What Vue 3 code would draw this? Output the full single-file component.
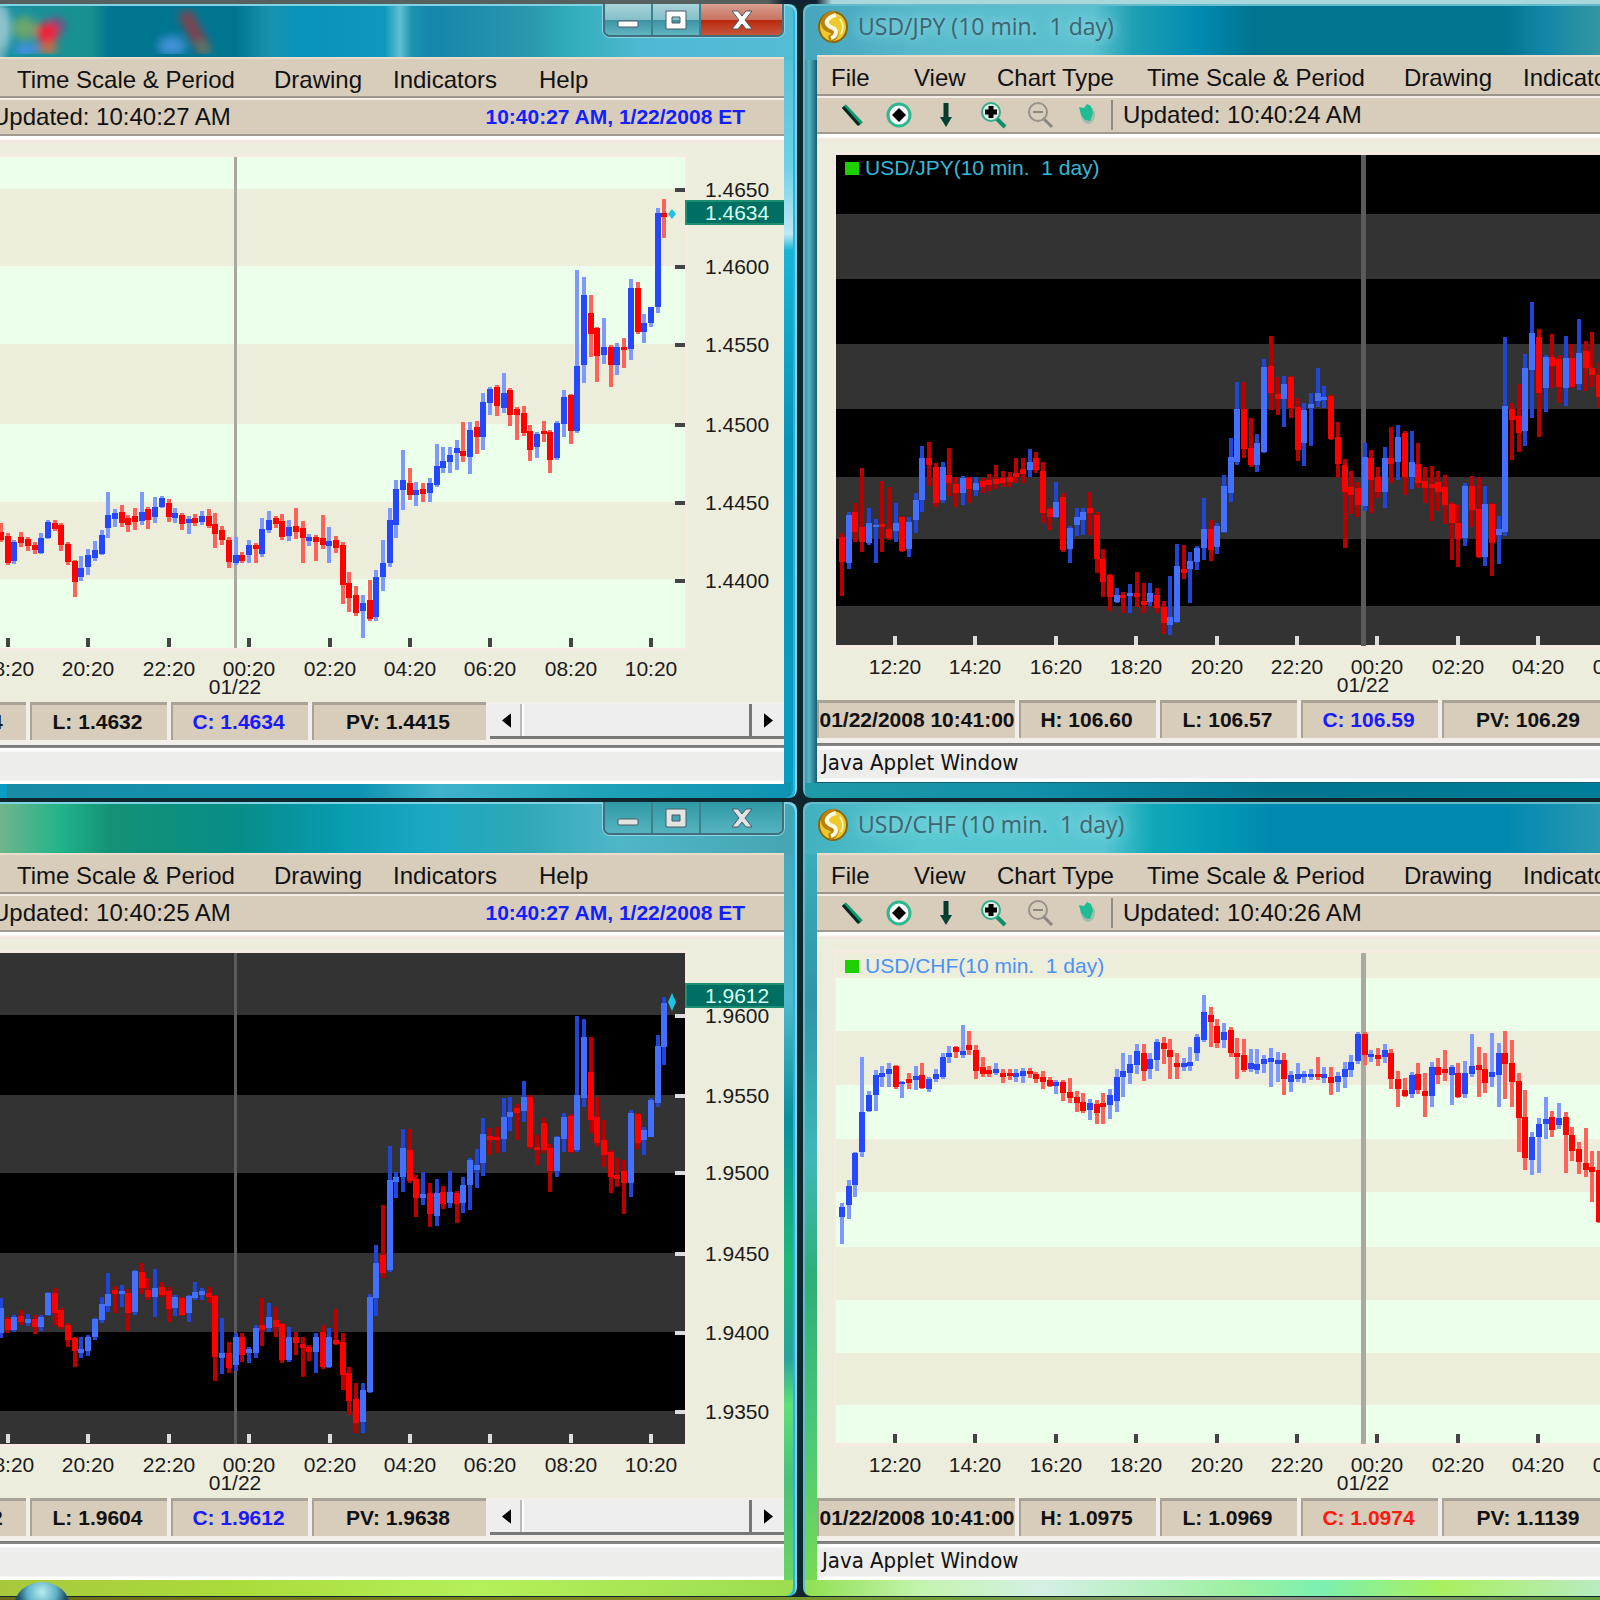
<script setup>
const parse = (text) =>
  text.trim().split(/\s+/).map((item) => {
    const [high, low, top, bottom] = item.slice(1).split(',').map(Number)
    return { up: item[0] === 'B', high, low, top, bottom }
  })

const eur = parse(`
R373,392,382,390 R383,415,386,413 B390,414,392,411 R382,397,387,393 R387,401,389,396 R392,404,395,400
B383,404,388,403 B370,389,372,388 R370,381,373,379 R373,401,375,395 R392,415,394,412 R410,447,411,432
B406,431,418,427 B399,425,405,417 B391,411,400,408 B380,405,385,404 B342,388,365,378 B359,377,363,369
R355,377,362,373 R365,382,368,375 R358,380,366,372 B342,375,362,371 R357,379,359,370 B347,373,357,367
B346,358,348,357 R349,372,353,367 B358,373,363,368 R363,380,365,374 B366,384,369,373 R364,376,368,373
B361,375,366,372 R359,378,366,376 R363,398,374,384 R376,395,380,390 R387,418,390,412 B387,415,405,413
R402,413,405,411 B390,413,395,405 R393,413,395,399 B368,407,379,404 B361,383,370,380 R366,378,368,374
R364,390,371,387 B370,391,377,386 R358,389,376,382 R371,413,378,388 B384,396,387,391 R385,411,387,392
R365,399,388,395 B377,413,391,396 R386,403,390,398 R392,454,395,435 R422,462,433,448 R436,466,445,463
B445,488,453,461 R430,471,450,469 B420,471,427,467 B390,441,413,427 B358,417,370,413 B330,388,339,375
B300,360,330,340 R318,350,333,345 B332,356,340,345 R333,352,339,344 B328,352,333,343 B294,337,316,335
B297,323,311,318 B297,323,305,312 B290,320,298,303 R272,312,301,306 B272,324,280,307 R271,304,277,287
B243,300,252,287 B237,265,239,253 R235,266,237,256 B223,263,243,258 R238,276,240,265 R257,290,259,265
R256,286,263,283 R275,311,281,300 B282,308,284,297 R271,292,281,284 R280,323,282,310 B271,310,273,308
B240,287,247,274 R244,294,245,281 B120,283,216,281 B127,233,145,215 R145,207,163,184 R177,232,178,206
B168,214,197,205 R195,237,197,215 B193,225,197,215 R188,218,197,200 B129,210,138,199 R132,184,138,182
B164,193,173,182 B157,177,157,173 B58,163,63,157 R49,88,63,67`)

const gbp = parse(`
B358,398,368,393 R377,393,379,390 B375,392,377,390 R370,385,376,382 B374,386,379,383 R375,394,379,387
B375,391,377,387 B352,376,353,375 R348,385,353,373 R368,389,370,387 R383,407,385,400 R397,427,398,411
B397,418,409,413 B395,416,397,411 B378,400,379,397 B357,383,364,380 B333,372,354,366 R346,373,350,354
B345,367,351,354 R349,391,353,373 B330,375,331,372 R323,354,332,348 R338,360,350,357 B329,377,348,357
R342,357,347,355 R347,382,351,369 B355,376,357,368 R357,376,358,375 B355,382,356,373 B342,360,352,358
B348,360,351,355 R347,363,353,357 R355,441,356,417 B378,434,413,418 R402,433,413,428 B393,431,397,425
R393,422,397,415 B407,423,409,413 B385,418,388,413 R358,406,385,390 B363,392,377,388 R367,397,380,387
R383,423,384,420 B387,422,397,420 R392,415,397,403 R397,437,404,408 R405,421,407,412 B393,433,397,412
R385,429,392,427 B388,428,397,427 R369,405,400,404 R393,450,402,435 R427,475,433,461 R443,493,459,483
B443,493,450,482 B354,453,357,452 B305,376,323,358 R265,338,315,333 B206,332,240,330 B232,258,237,242
B189,252,208,237 R189,243,210,241 R235,277,239,258 B232,265,254,258 R243,287,253,274 B239,286,253,276
R246,269,252,264 B231,268,252,263 R251,283,253,264 B237,273,245,263 B218,270,220,245 B209,248,225,230
B178,236,194,223 R188,215,196,200 R187,213,197,200 B158,212,177,199 B157,191,172,177 R164,200,168,173
B141,182,157,171 R155,209,157,207 R195,225,207,210 R178,213,183,210 R204,252,208,231 B196,237,197,231
B173,212,177,199 R174,213,176,212 B76,212,155,210 B79,167,97,158 R97,193,132,180 R157,207,177,203
R180,227,200,215 R210,253,212,237 R218,247,235,239 R220,274,231,243 B170,257,173,243 R173,209,174,203
B187,215,190,200 B158,197,160,197 B95,167,106,163 B57,125,63,107`)

const jpy = parse(`
R253,316,257,282 B232,289,235,283 R223,262,232,252 R188,272,247,262 B228,265,243,263 B239,283,245,247
R201,272,244,247 R207,260,249,258 B223,262,243,251 R236,272,237,271 B237,277,242,269 B213,253,220,240
B166,232,178,220 R162,206,178,185 R183,227,187,223 B182,223,187,220 R168,216,195,203 R197,227,204,213
B196,225,198,213 R197,223,198,209 B197,216,203,210 R198,213,201,207 R194,211,200,205 R185,209,199,204
R191,207,198,203 R192,207,197,202 R178,203,193,197 R178,203,189,194 B169,197,182,190 R172,193,178,190
R182,243,191,233 R227,250,229,237 B202,238,222,237 R213,272,217,270 B246,283,248,269 B228,256,237,245
B228,255,232,240 R212,255,228,233 R232,293,235,279 R269,317,279,302 R294,331,295,317 B308,323,315,322
R312,333,315,318 B304,333,313,316 R292,327,313,317 R303,333,321,325 B303,326,313,322 R308,333,315,328
R321,354,327,343 B296,355,337,345 B264,343,286,342 R265,299,289,293 B272,323,281,289 B266,290,268,282
B218,280,249,268 R240,281,249,270 B243,274,246,267 B195,253,206,252 B158,222,177,213 B102,185,129,182
R102,178,129,169 R138,187,168,185 B154,192,163,185 B79,173,87,172 R56,130,86,113 R97,135,114,119
B96,147,104,119 R96,138,97,128 R118,181,127,170 B123,186,130,163 B113,166,124,128 B88,127,113,121
B106,128,117,120 R115,160,116,159 R142,198,157,184 R179,268,185,212 R191,234,207,215 R202,237,208,225
B163,231,177,226 R170,233,178,200 R187,218,197,212 B167,228,178,212 R147,203,178,184 B145,200,157,182
R151,215,153,197 B151,209,182,197 R163,208,184,203 R187,223,201,208 R186,241,204,208 R191,231,202,212
R195,244,207,225 R222,280,224,243 R225,287,243,259 B203,266,206,258 R196,247,206,230 R197,278,229,277
B206,286,224,277 R223,296,224,263 B236,284,249,255 B57,256,126,252 R123,180,129,140 R104,172,136,153
B74,166,88,151 B22,138,53,90 R49,157,57,113 B75,132,77,108 R54,108,77,86 R75,123,79,107
B56,126,78,108 R64,108,78,107 B39,110,73,104 R61,111,71,88 R52,107,88,95 R82,128,95,117`)

const chf = parse(`
B263,304,267,277 B240,279,246,265 B212,257,213,245 B117,217,172,212 B151,172,155,171 B130,171,135,155
B126,147,133,137 B123,147,129,134 R125,149,126,147 B141,158,142,144 R133,149,139,143 B126,150,136,140
R123,149,135,148 B137,152,139,149 B129,142,134,139 B113,139,117,137 B106,123,113,117 R106,118,107,112
B85,118,111,115 R91,115,105,110 R105,139,110,131 R117,137,127,134 R126,137,130,134 B123,135,129,133
R129,143,133,137 R129,140,133,136 B129,142,133,137 B128,143,131,136 R128,138,131,134 R132,143,134,139
R131,149,137,142 R137,147,140,146 B140,154,142,146 R140,161,142,153 R138,163,152,158 R151,172,157,163
R153,173,162,171 B159,180,163,170 R160,184,164,173 R153,184,163,167 B149,179,155,165 B129,172,137,161
B113,157,131,137 B115,144,124,133 B104,134,111,125 R104,141,113,131 B113,139,119,129 B99,131,102,120
R97,124,103,109 R99,139,110,117 R113,139,123,127 B118,131,123,127 B107,131,122,126 B94,121,97,113
B55,102,72,100 R67,107,75,82 R79,108,86,103 B83,108,92,100 R87,117,90,113 R98,139,113,117
R99,132,115,130 B109,132,123,129 B109,134,124,130 B115,133,119,124 B108,147,118,122 B112,142,120,124
R113,155,120,139 B131,152,135,142 B123,142,134,139 B131,143,134,137 B129,140,134,137 R117,140,134,137
B127,143,134,138 R127,155,137,143 B132,152,136,142 B122,148,129,137 B115,137,122,130 B92,124,94,121
R92,125,94,115 B110,122,114,117 R108,126,115,119 B104,123,110,117 R109,149,113,139 R131,167,139,149
R138,157,150,156 B132,158,135,154 R123,154,134,150 R133,177,151,156 B122,167,127,156 R118,144,127,135
R110,141,129,133 B125,165,127,135 R123,158,133,157 B121,158,133,154 B94,137,126,134 R107,157,125,130
R113,153,129,143 B93,147,132,137 B103,167,113,135 R91,159,113,124 R100,167,123,142 R133,212,141,178
R150,230,177,218 B192,235,197,220 B178,233,184,197 B157,199,179,184 R171,197,177,190 B163,189,178,185
R172,233,177,195 R187,221,195,211 R202,234,209,222 R188,237,223,230 R211,262,227,232 R211,283,230,282`)

const hours = (list, from) => list.map((label, i) => ({ label, x: from + Math.round(i * 80.4) }))
const leftHours = hours(['18:20', '20:20', '22:20', '00:20', '02:20', '04:20', '06:20', '08:20', '10:20'], 8)
const rightHours = hours(['12:20', '14:20', '16:20', '18:20', '20:20', '22:20', '00:20', '02:20', '04:20', '06:20'], 78)

const menu = [
  { label: 'File', slot: 83 },
  { label: 'View', slot: 83 },
  { label: 'Chart Type', slot: 150 },
  { label: 'Time Scale & Period', slot: 257 },
  { label: 'Drawing', slot: 119 },
  { label: 'Indicators', slot: 146 },
  { label: 'Help', slot: 83 },
]

// bands: lower edge of each stripe, measured from the top of the chart panel
const windows = [
  {
    id: 'eur', side: 'left', skin: 'active', theme: 'light', title: '', menu: menu.slice(3),
    updated: '10:40:27 AM', clock: '10:40:27 AM, 1/22/2008 ET',
    candles: eur, first: 1, shift: 14, hours: leftHours, midnight: 235, line: 3,
    firstBand: 'a', bands: [53, 130, 208, 288, 366, 443, 512],
    prices: [['1.4650', 54], ['1.4600', 131], ['1.4550', 209], ['1.4500', 289], ['1.4450', 367], ['1.4400', 445]],
    tag: { label: '1.4634', y: 64, mark: 78, half: 5 },
    cells: [['H: 1.4634', ''], ['L: 1.4632', ''], ['C: 1.4634', 'up'], ['PV: 1.4415', 'wide']],
  },
  {
    id: 'jpy', side: 'right', skin: 'jpy-frame', theme: 'dark', title: 'USD/JPY (10 min.  1 day)', menu: menu.slice(0, 6),
    updated: '10:40:24 AM', clock: '',
    candles: jpy, first: 25, shift: 146, hours: rightHours, midnight: 546, line: 5,
    firstBand: 'a', bands: [80, 145, 210, 275, 343, 405, 472, 511], legend: 'USD/JPY(10 min.  1 day)', prices: [],
    cells: [['01/22/2008 10:41:00', 'date'], ['H: 106.60', ''], ['L: 106.57', ''], ['C: 106.59', 'up'], ['PV: 106.29', 'wide']],
  },
  {
    id: 'gbp', side: 'left', skin: 'gbp-frame', theme: 'dark', title: '', menu: menu.slice(3),
    updated: '10:40:25 AM', clock: '10:40:27 AM, 1/22/2008 ET',
    candles: gbp, first: 1, shift: 8, hours: leftHours, midnight: 235, line: 3,
    firstBand: 'b', bands: [83, 163, 241, 321, 400, 479, 512],
    prices: [['1.9600', 84], ['1.9550', 164], ['1.9500', 241], ['1.9450', 322], ['1.9400', 401], ['1.9350', 480]],
    tag: { label: '1.9612', y: 51, mark: 70, half: 9 },
    cells: [['H: 1.9612', ''], ['L: 1.9604', ''], ['C: 1.9612', 'up'], ['PV: 1.9638', 'wide']],
  },
  {
    id: 'chf', side: 'right', skin: 'chf-frame', theme: 'light', title: 'USD/CHF (10 min.  1 day)', menu: menu.slice(0, 6),
    updated: '10:40:26 AM', clock: '',
    candles: chf, first: 25, shift: 8, hours: rightHours, midnight: 546, line: 5,
    firstBand: 'b', bands: [46, 99, 153, 207, 260, 315, 368, 421, 473, 511], legend: 'USD/CHF(10 min.  1 day)', prices: [],
    cells: [['01/22/2008 10:41:00', 'date'], ['H: 1.0975', ''], ['L: 1.0969', ''], ['C: 1.0974', 'down'], ['PV: 1.1139', 'wide']],
  },
]

const PLOT_TOP = 21
const stripes = (w) =>
  w.bands.map((end, i) => {
    const start = i ? w.bands[i - 1] : PLOT_TOP
    const odd = i % 2 === 1
    const kind = (w.firstBand === 'a') === odd ? 'b' : 'a'
    return { y: start, height: end - start, kind }
  })
const candleX = (w, i) => w.first + Math.round(i * 6.7)
</script>

<template>
  <main class="desktop">
    <section v-for="w in windows" :key="w.id" class="window" :class="[w.side, w.skin]">
      <header class="titlebar">
        <template v-if="w.title">
          <svg class="coin" viewBox="0 0 32 34" aria-hidden="true">
            <ellipse cx="16" cy="17" rx="15" ry="16" fill="#8a6410" />
            <ellipse cx="16" cy="17" rx="13" ry="14" fill="#ecc92c" />
            <path d="M18 4C9 5 5 12 9 17c3 4 9 2 9 6 0 3-3 5-6 6" fill="none" stroke="#b9820e" stroke-width="7" />
            <path d="M19 5C11 7 8 12 11 15c3 4 8 2 8 7 0 3-2 5-5 6" fill="none" stroke="#fffbe0" stroke-width="4" />
            <path d="M23 9c3 4 4 10 1 15" fill="none" stroke="#fff3a8" stroke-width="2" />
          </svg>
          <h2 class="caption">{{ w.title }}</h2>
        </template>
        <template v-else>
          <svg v-if="w.id === 'eur'" class="reflection" viewBox="0 0 220 46" aria-hidden="true">
            <defs>
              <filter id="soft" x="-50%" y="-50%" width="200%" height="200%"><feGaussianBlur stdDeviation="4" /></filter>
            </defs>
            <g filter="url(#soft)">
              <ellipse cx="2" cy="20" rx="8" ry="22" fill="#8fc3cc" />
              <ellipse cx="24" cy="20" rx="12" ry="12" fill="#6aa66a" />
              <ellipse cx="56" cy="18" rx="9" ry="9" fill="#7a4a80" />
              <ellipse cx="48" cy="40" rx="9" ry="8" fill="#b5744a" />
              <ellipse cx="47" cy="25" rx="11" ry="11" fill="#f0243c" />
              <ellipse cx="26" cy="42" rx="12" ry="6" fill="#4a8fe8" />
              <ellipse cx="172" cy="38" rx="14" ry="10" fill="#3f90d6" />
              <path d="M184 4l22 42" stroke="#81404c" stroke-width="14" />
              <path d="M198 34l10 12" stroke="#4d8a6e" stroke-width="6" />
            </g>
          </svg>
          <div class="controls">
            <button type="button" aria-label="Minimize">
              <svg viewBox="0 0 24 24"><rect x="2" y="13" width="20" height="6" rx="1" /></svg>
            </button>
            <button type="button" aria-label="Maximize">
              <svg viewBox="0 0 24 24"><path fill-rule="evenodd" d="M2 3h20v18H2zM8 9v6h8V9z" /></svg>
            </button>
            <button type="button" class="close" aria-label="Close">
              <svg viewBox="0 0 24 24"><path d="M2 3h6l4 5 4-5h6l-7 9 7 9h-6l-4-5-4 5H2l7-9z" /></svg>
            </button>
          </div>
        </template>
      </header>

      <div class="content">
        <nav class="menubar">
          <button v-for="m in w.menu" :key="m.label" type="button" :style="{ width: m.slot + 'px' }">{{ m.label }}</button>
        </nav>

        <div class="toolbar">
          <div v-if="w.side === 'right'" class="tools">
            <button type="button" aria-label="Trend line">
              <svg viewBox="0 0 30 30"><path d="M7 6l17 18" stroke="#119a72" stroke-width="5" /><path d="M6 7l16 18" stroke="#06251e" stroke-width="3" /></svg>
            </button>
            <button type="button" aria-label="Crosshair">
              <svg viewBox="0 0 30 30"><circle cx="15" cy="15" r="11" fill="#fff" stroke="#2fb890" stroke-width="3" /><path d="M15 8l7 7-7 7-7-7z" /></svg>
            </button>
            <button type="button" aria-label="Arrow">
              <svg viewBox="0 0 30 30"><path d="M15 3v17" stroke="#053b2d" stroke-width="5" /><path d="M9 17h12l-6 10z" fill="#064233" /></svg>
            </button>
            <button type="button" aria-label="Zoom in">
              <svg viewBox="0 0 30 30"><path d="M18 18l9 9" stroke="#0c8f6a" stroke-width="4" /><circle cx="13" cy="12" r="9" fill="#d9efe4" stroke="#35ad8c" stroke-width="2" /><path d="M13 6v12M7 12h12" stroke="#000" stroke-width="5" /></svg>
            </button>
            <button type="button" aria-label="Zoom out">
              <svg viewBox="0 0 30 30"><path d="M18 18l9 9" stroke="#8a8780" stroke-width="3" /><circle cx="13" cy="12" r="9" fill="none" stroke="#97938b" stroke-width="2" /><path d="M8 12h10" stroke="#8a8780" stroke-width="2" /></svg>
            </button>
            <button type="button" aria-label="Pointer">
              <svg viewBox="0 0 30 30"><ellipse cx="16" cy="15" rx="7" ry="9" fill="#a4bcae" /><path d="M7 7l5 1 3-4 4 2 2 7-3 8-5-1-4-5z" fill="#1fbd95" /></svg>
            </button>
          </div>
          <p class="updated">Updated: {{ w.updated }}</p>
          <time v-if="w.clock" class="clock">{{ w.clock }}</time>
        </div>

        <svg class="chart" :class="w.theme" role="img" :aria-label="w.legend || 'Price chart'">
          <svg :x="w.side === 'left' ? '100%' : 0" overflow="visible">
            <g :transform="w.side === 'left' ? 'translate(-784 0)' : null">
              <rect :x="w.side === 'left' ? -2000 : 17" :y="PLOT_TOP - 3" :width="w.side === 'left' ? 2688 : 3000" height="497" class="halo" />
              <rect v-for="s in stripes(w)" :key="s.y" :x="w.side === 'left' ? -2000 : 19" :y="s.y"
                :width="w.side === 'left' ? 2685 : 3000" :height="s.height" :class="'band-' + s.kind" />
              <rect :x="w.midnight - Math.floor(w.line / 2)" :y="PLOT_TOP" :width="w.line" height="491" class="midnight" />
              <g v-for="(c, i) in w.candles" :key="i" :class="c.up ? 'rise' : 'fall'">
                <rect class="wick" :x="candleX(w, i) - 2" :y="c.high + w.shift" width="4" :height="c.low - c.high" />
                <rect class="body" :x="candleX(w, i) - 3" :y="c.top + w.shift" width="6" :height="c.bottom - c.top" />
              </g>
              <g v-for="h in w.hours" :key="h.x">
                <rect class="tick" :x="h.x - 2" y="502" width="4" height="9" />
                <text :x="h.x" y="540" text-anchor="middle">{{ h.label }}</text>
              </g>
              <text :x="w.midnight" y="558" text-anchor="middle">01/22</text>
              <g v-for="p in w.prices" :key="p[0]">
                <rect class="tick" x="675" :y="p[1] - 2" width="10" height="4" />
                <text x="705" :y="p[1] + 7">{{ p[0] }}</text>
              </g>
              <g v-if="w.tag">
                <rect x="685" :y="w.tag.y" width="99" height="25" fill="#1a9070" />
                <rect x="687" :y="w.tag.y + 2" width="97" height="21" fill="#006f63" />
                <text class="tag" x="705" :y="w.tag.y + 20">{{ w.tag.label }}</text>
                <path :d="`M672 ${w.tag.mark - w.tag.half}l4 ${w.tag.half}-4 ${w.tag.half}-4-${w.tag.half}z`" fill="#1fc4dc" />
              </g>
              <g v-if="w.legend">
                <rect x="28" y="28" width="14" height="13" fill="#1fd000" />
                <text class="legend" x="48" y="41">{{ w.legend }}</text>
              </g>
            </g>
          </svg>
        </svg>

        <div class="quotes">
          <span v-for="c in w.cells" :key="c[0]" class="cell" :class="c[1]">{{ c[0] }}</span>
          <div v-if="w.side === 'left'" class="scroller">
            <button type="button" aria-label="Scroll left"><svg viewBox="0 0 10 16"><path d="M10 0v16L0 8z" /></svg></button>
            <div class="thumb"></div>
            <button type="button" aria-label="Scroll right"><svg viewBox="0 0 10 16"><path d="M0 0v16l10-8z" /></svg></button>
          </div>
        </div>
        <footer class="applet">{{ w.side === 'right' ? 'Java Applet Window' : '' }}</footer>
      </div>
    </section>
    <span class="globe"></span>
  </main>
</template>

<style>
body {
  margin: 0;
  background: #0e262c;
}
</style>

<style scoped>
.desktop {
  position: relative;
  display: grid;
  grid-template-columns: minmax(0, 1fr) minmax(0, 1fr);
  gap: 4px 6px;
  padding: 4px 0;
  overflow: hidden;
  font-family: "Liberation Sans", Arial, sans-serif;
  color: #111;
  background:
    linear-gradient(90deg, #56605e, #56605e 48%, #123 49%, #123 51%, #a8d8dc 52%) top / 100% 4px no-repeat,
    linear-gradient(90deg, #6a6a18, #7f8a24 40%, #6f9c3a 60%, #8f8f86 80%, #5f9c3c) bottom / 100% 3px no-repeat,
    #0e262c;
}
.desktop button {
  margin: 0;
  padding: 0;
  border: 0;
  background: none;
  font: inherit;
  color: inherit;
}
.window {
  display: flex;
  flex-direction: column;
  box-sizing: border-box;
  min-width: 0;
  height: 794px;
  overflow: hidden;
}
.left {
  padding-right: 13px;
  border-radius: 0 8px 8px 0;
  box-shadow: inset -2px 2px 0 #7fd3e4, inset -4px 0 0 #20b8dc;
}
.right {
  padding-left: 14px;
  border-radius: 8px 0 0 8px;
  box-shadow: inset 2px 2px 0 #62bccb;
}
.active {
  background:
    linear-gradient(90deg, #6fb0bd 0, #1a91a0 10px, #17918f 90px, #007590 110px, #007590 235px, #1893ae 270px, #0893bd 300px, #0f98bb 385px, #62bfd0 400px, #1a93b0 412px, #1486ac 430px, #2a97ae 530px, #30aeb8 570px, #4fb8d2 640px, #55bcd6 100%) top / 100% 56px no-repeat,
    linear-gradient(90deg, #188ca5, #0f93b3 45%, #3fb4cc 55%, #1fa3b8 75%, #0f93b3) bottom / calc(100% - 13px) 16px no-repeat,
    linear-gradient(#4fb8d2, #6cd0e8 20%, #bfe8f2 29%, #18b4d8 31%, #0a93b8 55%, #0a9cc4);
}
.jpy-frame {
  background:
    linear-gradient(90deg, #45a5bd, #58bacb 120px, #5cc0cf 290px, #1ea0b4 330px, #0088b0 400px, #007590 450px, #007590 700px, #1186a8 740px, #3596a2) top / 100% 56px no-repeat,
    linear-gradient(90deg, #1f9aa8, #128ea8 30%, #007590 60%, #007d9a) bottom / 100% 15px no-repeat,
    linear-gradient(90deg, #2b8795, #58b4c2 6px, #145f70 14px);
}
.gbp-frame {
  background:
    linear-gradient(90deg, #6fb58c 0, #22b48a 60px, #149276 110px, #078d88 240px, #079aae 330px, #1ba8c4 430px, #2ea8b6 520px, #50b6c8 620px, #45a5b2) top / 100% 52px no-repeat,
    linear-gradient(90deg, #a8c83c, #aadc3c 30%, #b4f05a 60%, #9cdc50) bottom / 100% 16px no-repeat,
    linear-gradient(#45a5b2, #50b8cc 25%, #0a8f9f 40%, #1fb878 58%, #2aa39a 70%, #5fe07a 76%, #4cc07a 85%, #6ed860);
}
.chf-frame {
  background:
    linear-gradient(90deg, #42b0bf, #56c8d0 120px, #58c6d2 300px, #10a8b8 350px, #0098b4 420px, #0088b0 470px, #0088b0 700px, #2a98b2) top / 100% 52px no-repeat,
    linear-gradient(90deg, #8ee050, #c4f4b0 15%, #d4f0e4 30%, #9cf0a0 55%, #7cf0b0 65%, #a8f060 80%, #b8ecc0) bottom / 100% 16px no-repeat,
    linear-gradient(#3fb5c0, #2f95a8 25%, #3fb8b8 45%, #2fae78 60%, #4cc878 80%, #7cdc50);
}
.titlebar {
  position: relative;
  display: flex;
  align-items: flex-start;
  flex: none;
  height: 51px;
}
.active .titlebar {
  height: 53px;
}
.coin {
  flex: none;
  width: 32px;
  height: 34px;
  margin-top: 6px;
}
.caption {
  margin: 4px 0 0 9px;
  font-family: "Open Sans", "Noto Sans", sans-serif;
  font-size: 23px;
  font-weight: 400;
  line-height: 36px;
  white-space: pre;
  color: #3d6470;
  text-shadow: 0 0 10px #8fdbe6, 0 0 16px #8fdbe6;
}
.reflection {
  position: absolute;
  top: 4px;
  left: 0;
  width: 220px;
  height: 46px;
}
.controls {
  display: flex;
  margin-left: auto;
  border: 2px solid #3f6f7c;
  border-top: 0;
  border-radius: 0 0 7px 7px;
  overflow: hidden;
  box-shadow: 0 0 0 1px #8fd4e0;
}
.controls button {
  display: flex;
  align-items: center;
  justify-content: center;
  width: 48px;
  height: 31px;
  border-right: 2px solid #3f7f8e;
  background: linear-gradient(#a9d3da, #86c0ca 50%, #3d93a2 52%, #5fb5c2);
}
.controls .close {
  width: 81px;
  border-right: 0;
  background: linear-gradient(#d9a090, #c87460 50%, #b8280c 52%, #c8553a);
}
.controls svg {
  width: 24px;
  height: 24px;
  fill: #fff;
  stroke: #4b5a60;
  stroke-width: 1;
}
.gbp-frame .controls button {
  background: linear-gradient(#2f98a4, #55b4c0);
}
.gbp-frame .controls svg {
  fill: #e2e4e4;
}
.content {
  flex: none;
  background: #ededdd;
}
.menubar {
  display: flex;
  box-sizing: border-box;
  height: 41px;
  padding-left: 14px;
  border-top: 2px solid #ecdccb;
  border-bottom: 2px solid #9c958b;
  background: #d8ccbb;
  overflow: hidden;
}
.left .menubar {
  padding-left: 17px;
}
.desktop .menubar button {
  flex: none;
  padding-top: 5px;
  font-size: 24px;
  line-height: 32px;
  text-align: left;
  white-space: nowrap;
}
.toolbar {
  display: flex;
  align-items: center;
  box-sizing: border-box;
  height: 38px;
  border-top: 2px solid #f3ede6;
  border-bottom: 2px solid #a09a90;
  background: #d8ccbb;
  overflow: hidden;
}
.tools {
  display: flex;
  gap: 17px;
  margin-left: 20px;
  padding-right: 9px;
  border-right: 2px solid #8f8c84;
}
.tools svg {
  display: block;
  width: 30px;
  height: 30px;
}
.updated {
  flex: none;
  margin: 0 0 0 10px;
  font-size: 24px;
  line-height: 34px;
  white-space: nowrap;
}
.left .updated {
  margin-left: -8px;
}
.clock {
  margin-left: auto;
  margin-right: 39px;
  font-size: 21px;
  font-weight: 700;
  color: #1220ff;
  white-space: nowrap;
}
.chart {
  display: block;
  width: 100%;
  height: 566px;
  background: linear-gradient(#fff, #fff 3px, #f3e4de 5px, #ededdd 8px);
  overflow: hidden;
}
.chart text {
  font-size: 21px;
  fill: #1a1a1a;
  white-space: pre;
}
.chart .halo {
  fill: #f6ebe2;
}
.light .band-a {
  fill: #ebffeb;
}
.light .band-b {
  fill: #ededdb;
}
.dark .band-a {
  fill: #000;
}
.dark .band-b {
  fill: #333;
}
.light .midnight {
  fill: #a9a9a2;
}
.dark .midnight {
  fill: #5a5a58;
}
.light .rise .wick {
  fill: #7d98ff;
}
.light .rise .body {
  fill: #2548ff;
}
.light .fall .wick {
  fill: #ff6258;
}
.fall .body {
  fill: #f00;
}
.dark .rise .wick {
  fill: #2146d6;
}
.dark .rise .body {
  fill: #4470ff;
}
.dark .fall .wick {
  fill: #b80000;
}
.light .tick {
  fill: #444;
}
.dark .tick {
  fill: #ddd;
}
.chart .tag {
  fill: #d5fff0;
}
.light .legend {
  fill: #4a92f5;
}
.dark .legend {
  fill: #35b8d8;
}
.quotes {
  display: flex;
  gap: 4px;
  box-sizing: border-box;
  height: 38px;
  background: #f2eeea;
  overflow: hidden;
}
.left .cell:first-child {
  margin-left: -111px;
}
.cell {
  flex: none;
  box-sizing: border-box;
  width: 137px;
  padding-right: 4px;
  border-top: 3px solid #a9a297;
  border-left: 2px solid #a9a297;
  background: #d8ccbb;
  font-size: 21px;
  font-weight: 700;
  line-height: 34px;
  text-align: center;
  white-space: nowrap;
}
.cell.date {
  width: 198px;
  padding-right: 0;
}
.cell.wide {
  width: 174px;
}
.cell.up {
  color: #1a1aff;
}
.cell.down {
  color: #ff1a10;
}
.scroller {
  display: flex;
  flex: 1;
  min-width: 0;
  box-sizing: border-box;
  margin: 2px 0 1px;
  border-bottom: 3px solid #777;
  background: #eee;
}
.scroller button {
  display: flex;
  align-items: center;
  justify-content: center;
  width: 32px;
}
.scroller svg {
  width: 9px;
  height: 15px;
}
.thumb {
  flex: 1;
  border-left: 2px solid #fff;
  border-right: 3px solid #777;
  box-shadow: -2px 0 0 #bbb;
}
.applet {
  box-sizing: border-box;
  height: 44px;
  padding-left: 5px;
  border-top: 5px solid #f2eeea;
  background: linear-gradient(#777, #8a8a8a 3px, #fff 3px, #fff 6px, #ededec 7px, #ededec 35px, #fff 36px);
  font-family: "DejaVu Sans Condensed", "DejaVu Sans", sans-serif;
  font-size: 22px;
  font-stretch: condensed;
  line-height: 40px;
}
.globe {
  position: absolute;
  bottom: -32px;
  left: 14px;
  width: 56px;
  height: 50px;
  border-radius: 50%;
  background: radial-gradient(circle at 50% 20%, #b8ecf0, #5fb0c8 30%, #1c5068 50%);
}
</style>
